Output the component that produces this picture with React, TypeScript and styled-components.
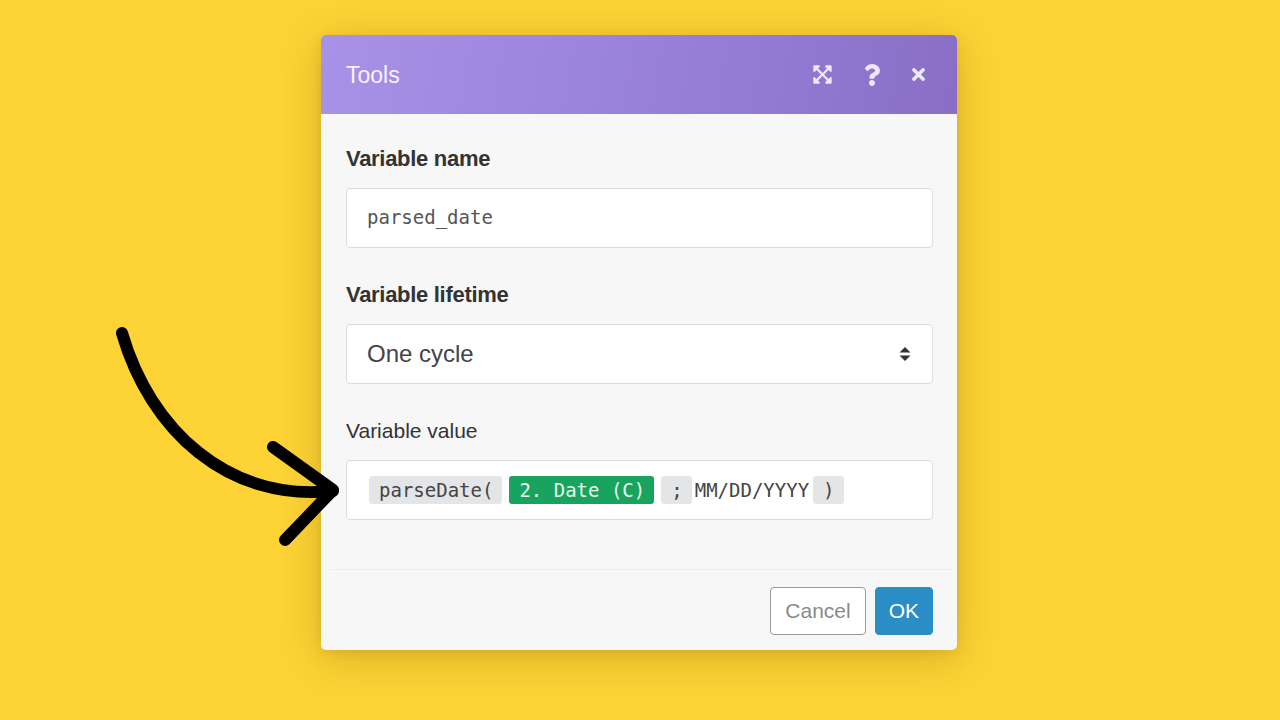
import React from 'react';
import styled, { createGlobalStyle } from 'styled-components';
import { FaExpandArrowsAlt, FaQuestion, FaTimes } from 'react-icons/fa';

const GlobalStyle = createGlobalStyle`
    html, body {
        margin: 0;
        padding: 0;
        background: #fdd335;
    }
    * {
        box-sizing: border-box;
    }
`;

const Page = styled.div`
    position: relative;
    width: 1280px;
    height: 720px;
    overflow: hidden;
    background: #fdd335;
    display: flex;
    justify-content: center;
    align-items: flex-start;
    padding: 35px 2px 0 0;
    font-family: "Liberation Sans", Arial, sans-serif;
`;

const Dialog = styled.div`
    width: 636px;
    border-radius: 5px;
    overflow: hidden;
    background: #f7f7f7;
    box-shadow: 0 8px 40px rgba(120, 80, 0, 0.28), 0 2px 8px rgba(120, 80, 0, 0.12);
`;

const Header = styled.div`
    height: 79px;
    padding: 0 29px 0 25px;
    display: flex;
    align-items: center;
    background: linear-gradient(100deg, #a892e7 0%, #9a83dc 45%, #8a6ec6 100%);
`;

const Title = styled.h1`
    flex: 1;
    margin: 0;
    padding-top: 2px;
    font-size: 23px;
    font-weight: 400;
    color: #f6f2ff;
`;

const HeaderIcons = styled.div`
    display: flex;
    align-items: center;
    gap: 26px;
    color: #ede7fb;
`;

const IconButton = styled.span<{ size: number; space?: number }>`
    display: flex;
    align-items: center;
    justify-content: center;
    margin-right: ${props => props.space ?? 0}px;
    font-size: ${props => props.size}px;
    cursor: pointer;
`;

const Body = styled.div`
    padding: 32px 24px 49px 25px;
`;

const Field = styled.div`
    & + & {
        margin-top: 34px;
    }
`;

const Label = styled.label<{ bold?: boolean }>`
    display: block;
    height: 26px;
    line-height: 26px;
    margin-bottom: 16px;
    font-size: ${props => props.bold ? '22px' : '21px'};
    font-weight: ${props => props.bold ? 700 : 400};
    letter-spacing: ${props => props.bold ? '-0.3px' : '0'};
    color: #333;
`;

const Box = styled.div`
    height: 60px;
    display: flex;
    align-items: center;
    background: #fff;
    border: 1px solid #dcdcdc;
    border-radius: 4px;
`;

const TextInput = styled(Box)`
    padding: 0 20px 3px;
    font-family: "DejaVu Sans Mono", monospace;
    font-size: 19px;
    color: #555;
`;

const Select = styled(Box)`
    padding: 0 20px;
    justify-content: space-between;
    font-size: 24px;
    color: #444;
`;

const SelectArrows = styled.svg`
    width: 12px;
    height: 16px;
    margin-right: 1px;
`;

const ValueBox = styled(Box)`
    padding: 0 22px;
    font-family: "DejaVu Sans Mono", monospace;
    font-size: 19px;
    color: #444;
`;

const Chip = styled.span<{ green?: boolean; gap?: number }>`
    display: inline-flex;
    align-items: center;
    height: 28px;
    padding: 0 9px 0 10px;
    margin-right: ${props => props.gap ?? 0}px;
    border-radius: 3px;
    background: ${props => props.green ? '#18a35f' : '#e4e5e7'};
    color: ${props => props.green ? '#e8f7ee' : '#444'};
    white-space: pre;
`;

const PlainText = styled.span`
    margin-right: 4px;
    white-space: pre;
`;

const Footer = styled.div`
    margin: 0 5px 0 9px;
    padding: 17px 19px 15px 0;
    border-top: 1px solid #ececec;
    display: flex;
    justify-content: flex-end;
    gap: 9px;
`;

const Button = styled.button<{ primary?: boolean }>`
    height: 48px;
    padding: 0 ${props => props.primary ? 13 : 14}px;
    border-radius: 4px;
    font-family: "Liberation Sans", Arial, sans-serif;
    font-size: 21px;
    cursor: pointer;
    border: 1px solid ${props => props.primary ? '#2b8dc5' : '#9a9a9a'};
    background: ${props => props.primary ? '#2b8dc5' : '#fff'};
    color: ${props => props.primary ? '#fff' : '#8a8a8a'};
`;

const Arrow = styled.svg`
    position: absolute;
    left: 0;
    top: 0;
    width: 1280px;
    height: 720px;
    pointer-events: none;
`;

export default function App() {
    return (
        <Page>
            <GlobalStyle />
            <Dialog>
                <Header>
                    <Title>Tools</Title>
                    <HeaderIcons>
                        <IconButton size={21} space={2}><FaExpandArrowsAlt /></IconButton>
                        <IconButton size={22}><FaQuestion /></IconButton>
                        <IconButton size={19}><FaTimes /></IconButton>
                    </HeaderIcons>
                </Header>
                <Body>
                    <Field>
                        <Label bold>Variable name</Label>
                        <TextInput>parsed_date</TextInput>
                    </Field>
                    <Field>
                        <Label bold>Variable lifetime</Label>
                        <Select>
                            <span>One cycle</span>
                            <SelectArrows viewBox="0 0 12 16">
                                <path d="M6 1 L11.5 6.5 L0.5 6.5 Z" fill="#333" />
                                <path d="M6 15 L11.5 9.5 L0.5 9.5 Z" fill="#333" />
                            </SelectArrows>
                        </Select>
                    </Field>
                    <Field>
                        <Label>Variable value</Label>
                        <ValueBox>
                            <Chip gap={7}>parseDate(</Chip>
                            <Chip green gap={7}>2. Date (C)</Chip>
                            <Chip gap={3}>;</Chip>
                            <PlainText>MM/DD/YYYY</PlainText>
                            <Chip>)</Chip>
                        </ValueBox>
                    </Field>
                </Body>
                <Footer>
                    <Button>Cancel</Button>
                    <Button primary>OK</Button>
                </Footer>
            </Dialog>
            <Arrow viewBox="0 0 1280 720">
                <g fill="none" stroke="#000" strokeWidth={12} strokeLinecap="round" strokeLinejoin="round">
                    <path d="M122 333 C 150 430, 228 502, 333 491" />
                    <path d="M273 447 L 333 490 L 285 540" />
                </g>
            </Arrow>
        </Page>
    );
}
